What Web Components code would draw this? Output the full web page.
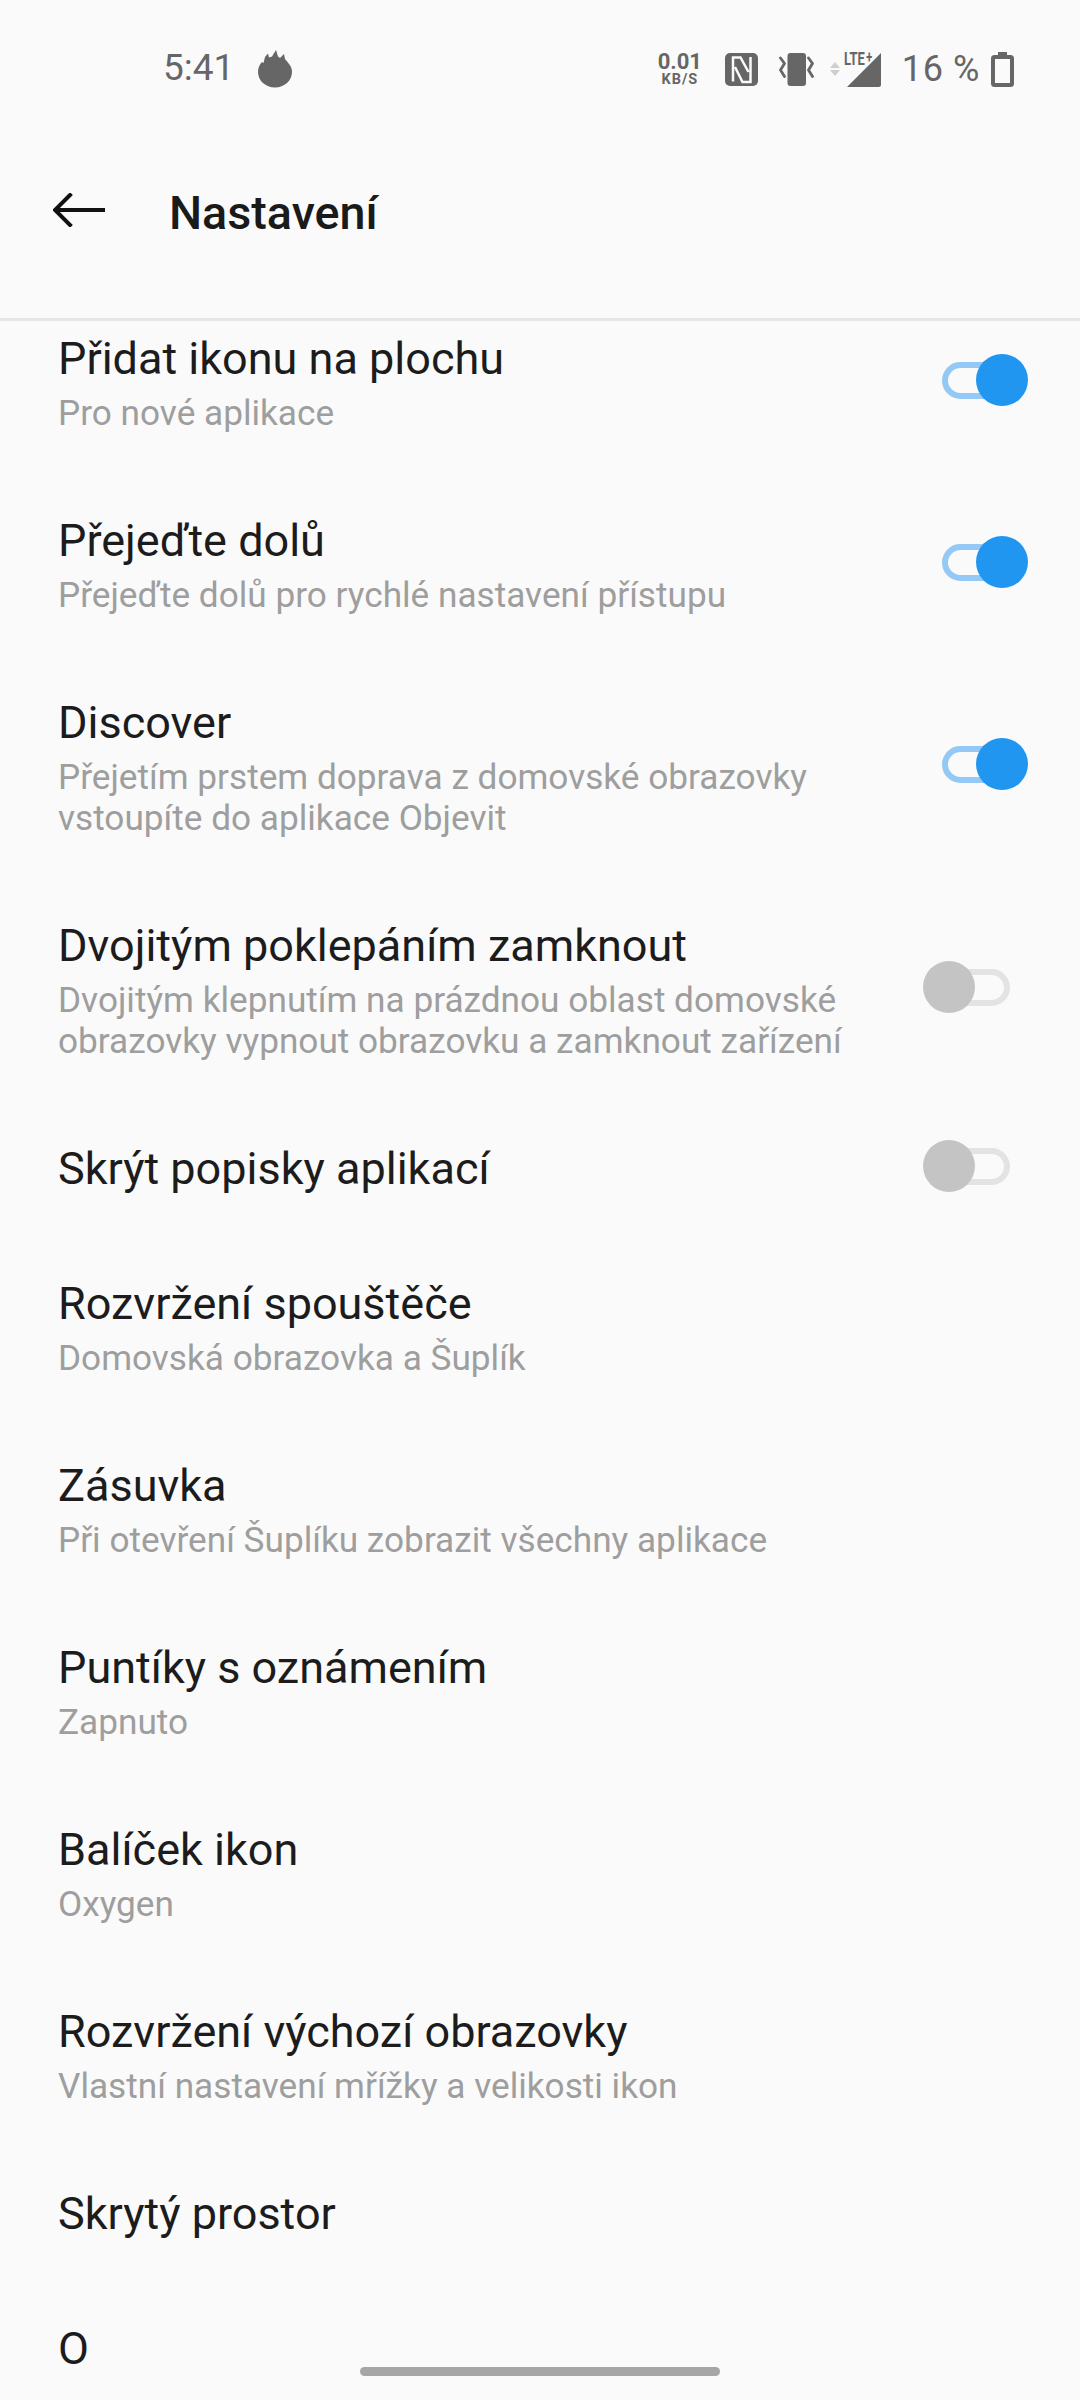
<!DOCTYPE html>
<html lang="cs">
<head>
<meta charset="utf-8">
<title>Nastavení</title>
<style>
  html, body { margin: 0; padding: 0; background: #fafafa; }
  body { width: 1080px; height: 2400px; overflow: hidden; font-family: Roboto, "Liberation Sans", sans-serif; }
  settings-screen { height: 2400px; }
</style>
</head>
<body>
<settings-screen>
  <status-bar slot="top" time="5:41" battery="16 %"></status-bar>
  <app-header slot="top">Nastavení</app-header>
  <setting-row toggle="on"><span>Přidat ikonu na plochu</span><span slot="sub">Pro nové aplikace</span></setting-row>
  <setting-row toggle="on"><span>Přejeďte dolů</span><span slot="sub">Přejeďte dolů pro rychlé nastavení přístupu</span></setting-row>
  <setting-row toggle="on"><span>Discover</span><span slot="sub">Přejetím prstem doprava z domovské obrazovky<br>vstoupíte do aplikace Objevit</span></setting-row>
  <setting-row toggle="off"><span>Dvojitým poklepáním zamknout</span><span slot="sub">Dvojitým klepnutím na prázdnou oblast domovské<br>obrazovky vypnout obrazovku a zamknout zařízení</span></setting-row>
  <setting-row toggle="off"><span>Skrýt popisky aplikací</span></setting-row>
  <setting-row><span>Rozvržení spouštěče</span><span slot="sub">Domovská obrazovka a Šuplík</span></setting-row>
  <setting-row><span>Zásuvka</span><span slot="sub">Při otevření Šuplíku zobrazit všechny aplikace</span></setting-row>
  <setting-row><span>Puntíky s oznámením</span><span slot="sub">Zapnuto</span></setting-row>
  <setting-row><span>Balíček ikon</span><span slot="sub">Oxygen</span></setting-row>
  <setting-row><span>Rozvržení výchozí obrazovky</span><span slot="sub">Vlastní nastavení mřížky a velikosti ikon</span></setting-row>
  <setting-row><span>Skrytý prostor</span></setting-row>
  <setting-row><span>O</span></setting-row>
</settings-screen>

<script>
class SettingsScreen extends HTMLElement {
  constructor() {
    super();
    this.attachShadow({ mode: 'open' }).innerHTML = `
      <style>
        :host { display: flex; flex-direction: column; position: relative; overflow: hidden; background: #fafafa; }
        .list { flex: 1; min-height: 0; overflow: hidden; }
        /* list is scrolled a bit, first row sits under the header */
        .inner { margin-top: -33px; }
        .pill { position: absolute; left: 360px; top: 2367px; width: 360px; height: 9px; border-radius: 5px; background: #a6a6a6; }
      </style>
      <slot name="top"></slot>
      <div class="list"><div class="inner"><slot></slot></div></div>
      <div class="pill"></div>
    `;
  }
}

class StatusBar extends HTMLElement {
  constructor() {
    super();
    this.attachShadow({ mode: 'open' }).innerHTML = `
      <style>
        :host { display: flex; align-items: center; height: 136px; box-sizing: border-box; padding: 0 66px 0 163px; color: #666; font-family: Roboto, sans-serif; }
        .time { font-size: 37px; line-height: 136px; width: 95px; flex: none; }
        svg { display: block; flex: none; }
        .fire { margin-top: 1px; }
        .right { margin-left: auto; display: flex; align-items: center; height: 40px; margin-top: 3px; }
        .speed { width: 46px; text-align: center; font-weight: 700; margin-right: 22px; margin-top: -2px; }
        .speed div:first-child { font-size: 22px; line-height: 22px; }
        .speed div:last-child { font-size: 14.5px; line-height: 14px; letter-spacing: 1px; }
        .net { position: relative; width: 53px; height: 36px; margin: 0 20px 0 15px; }
        .net svg { position: absolute; left: 0; top: 0; }
        .lte { position: absolute; left: 15px; top: -2px; font-size: 19px; line-height: 18px; font-weight: 700; transform: scaleX(.68); transform-origin: left top; white-space: nowrap; }
        .lte span { font-size: 16px; position: relative; top: -2px; margin-left: 2px; }
        .pct { font-size: 36px; letter-spacing: .6px; margin-right: 11px; white-space: pre; margin-top: -2px; }
      </style>
      <span class="time"></span>
      <svg class="fire" width="34" height="38" viewBox="0 0 34 38"><path fill="#666" d="M17 37.500C7.500 37.500 0 30.500 0 22 0 18 1.500 14.500 4 12L5.500 13 7 7 10 3.500 11 7.500 14 6.500 18 0 20 6.500 22 8 26 4 27 9 29.500 12 31 14C33 16 34 19 34 22 34 30.500 26.500 37.500 17 37.500Z"/></svg>
      <div class="right">
        <div class="speed"><div>0.01</div><div>KB/S</div></div>
        <svg width="33" height="33" viewBox="0 0 33 33" style="margin-right:21px"><rect width="33" height="33" rx="5" fill="#666"/><path fill="none" stroke="#fafafa" stroke-width="2.500" d="M8 28.500V4.500H15.500L23.500 19M25.500 4V29H17.500L10 14"/></svg>
        <svg width="35" height="33" viewBox="0 0 35 33"><rect x="8.500" y="0" width="18.500" height="33" rx="3" fill="#666"/><path fill="none" stroke="#666" stroke-width="2.800" stroke-linejoin="round" stroke-linecap="round" d="M1.500 5 5.500 10.500 1.500 17 5.500 23.500M29.500 5 33.500 10.500 29.500 17 33.500 23.500"/></svg>
        <div class="net">
          <svg width="53" height="36" viewBox="0 0 53 36"><path fill="#cfcfcf" d="M1 16 6 10 11 16ZM1 18 11 18 6 24Z"/><path fill="#666" d="M52 1V32.500A2.500 2.500 0 0 1 49.500 35H18Z"/></svg>
          <span class="lte">LTE<span>+</span></span>
        </div>
        <span class="pct"></span>
        <svg width="23" height="35" viewBox="0 0 23 35"><path fill="#666" fill-rule="evenodd" d="M7 0H16V3H19.500A3.500 3.500 0 0 1 23 6.500V31.500A3.500 3.500 0 0 1 19.500 35H3.500A3.500 3.500 0 0 1 0 31.500V6.500A3.500 3.500 0 0 1 3.500 3H7ZM4 7V31H19V7Z"/></svg>
      </div>
    `;
  }
  connectedCallback() {
    this.shadowRoot.querySelector('.time').textContent = this.getAttribute('time');
    this.shadowRoot.querySelector('.pct').textContent = this.getAttribute('battery');
  }
}

class AppHeader extends HTMLElement {
  constructor() {
    super();
    this.attachShadow({ mode: 'open' }).innerHTML = `
      <style>
        :host { display: flex; align-items: flex-start; height: 185px; box-sizing: border-box; border-bottom: 3px solid #e6e6e6; background: #fafafa; position: relative; z-index: 1; }
        svg { display: block; margin: 57px 0 0 53px; flex: none; }
        .title { margin: 49px 0 0 64px; font: 500 46.7px/56px Roboto, sans-serif; color: #1a1a1a; }
      </style>
      <svg width="52" height="34" viewBox="0 0 52 34"><path fill="none" stroke="#111" stroke-width="4" stroke-linecap="square" d="M50 17H3M17 2 2 17 17 32"/></svg>
      <div class="title"><slot></slot></div>
    `;
  }
}

class SettingRow extends HTMLElement {
  constructor() {
    super();
    this.attachShadow({ mode: 'open' }).innerHTML = `
      <style>
        :host { display: flex; align-items: center; box-sizing: border-box; min-height: 135px; padding: 41px 52px 36px 58px; font-family: Roboto, sans-serif; }
        .text { flex: 1; min-width: 0; }
        .title { font-size: 45px; line-height: 60px; color: #1c1c1c; }
        .sub { font-size: 35.2px; line-height: 41px; color: #9e9e9e; margin-top: 4px; }
      </style>
      <div class="text">
        <div class="title"><slot></slot></div>
        <div class="sub"><slot name="sub"></slot></div>
      </div>
      <span id="end"></span>
    `;
  }
  connectedCallback() {
    const single = !this.querySelector('[slot=sub]');
    const state = this.getAttribute('toggle');
    if (state && !this.shadowRoot.querySelector('toggle-switch')) {
      const sw = document.createElement('toggle-switch');
      if (state === 'on') sw.setAttribute('checked', '');
      if (single) sw.style.marginTop = '-6px';
      this.shadowRoot.querySelector('#end').replaceWith(sw);
    }
    // single line rows are shorter than the padding would make them
    if (single) {
      this.shadowRoot.querySelector('.sub').style.display = 'none';
      this.style.paddingTop = '41px';
      this.style.paddingBottom = '34px';
    }
  }
}

class ToggleSwitch extends HTMLElement {
  constructor() {
    super();
    this.attachShadow({ mode: 'open' }).innerHTML = `
      <style>
        :host { display: block; position: relative; flex: none; width: 105px; height: 52px; margin-top: -4px; }
        .track { position: absolute; left: 19px; top: 8px; width: 68px; height: 37px; box-sizing: border-box; border: 6px solid #e3e3e3; border-radius: 19px; }
        .thumb { position: absolute; left: 0; top: 0; width: 52px; height: 52px; border-radius: 50%; background: #c4c4c4; }
        :host([checked]) .track { border-color: #93c9f4; }
        :host([checked]) .thumb { left: 53px; background: #2196f0; }
      </style>
      <div class="track"></div>
      <div class="thumb"></div>
    `;
  }
}

customElements.define('settings-screen', SettingsScreen);
customElements.define('status-bar', StatusBar);
customElements.define('app-header', AppHeader);
customElements.define('toggle-switch', ToggleSwitch);
customElements.define('setting-row', SettingRow);
</script>
</body>
</html>
